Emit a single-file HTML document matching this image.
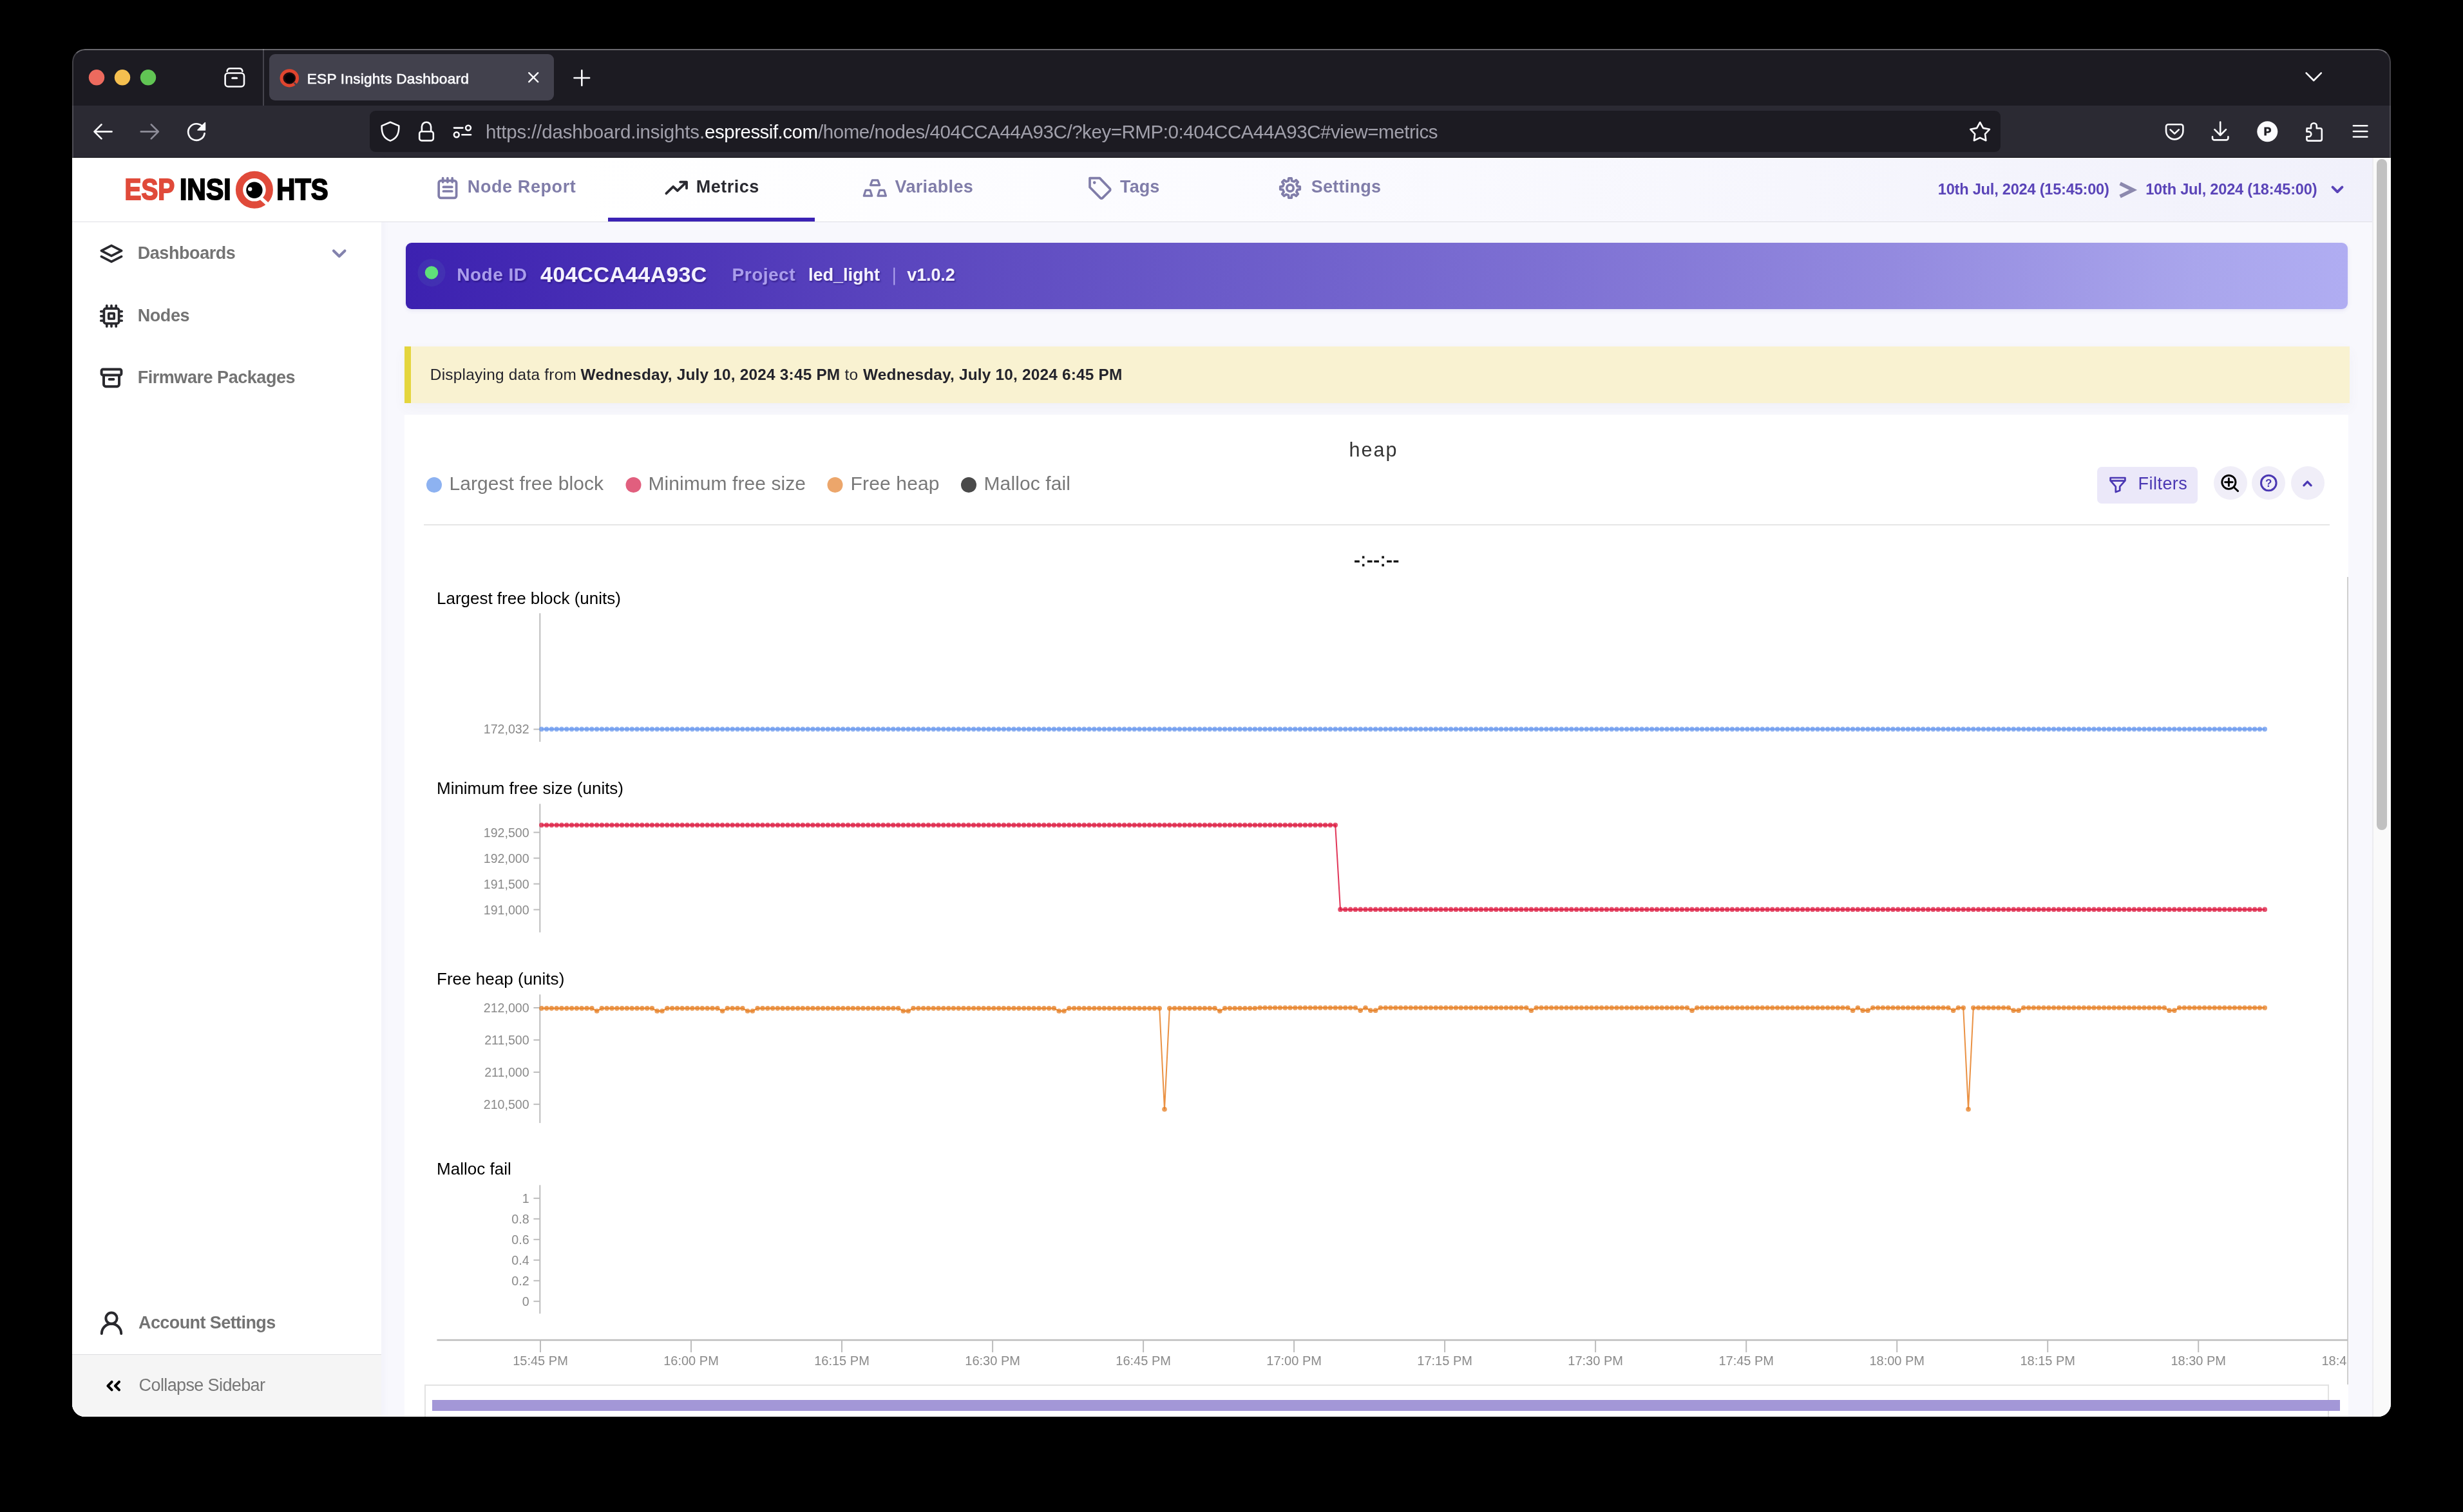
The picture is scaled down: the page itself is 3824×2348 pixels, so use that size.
<!DOCTYPE html>
<html lang="en"><head><meta charset="utf-8"><title>ESP Insights Dashboard</title>
<style>
html,body{margin:0;padding:0;background:#000;}
body{width:3824px;height:2348px;position:relative;overflow:hidden;font-family:"Liberation Sans",sans-serif;}
#win{position:absolute;left:0;top:0;width:3824px;height:2348px;clip-path:inset(76px 112px 148px 112px round 20px);}
#win>div{position:absolute;box-sizing:border-box;}
#ov{will-change:transform;position:absolute;left:0;top:0;width:3824px;height:2348px;font-family:"Liberation Sans",sans-serif;}
#ov text{white-space:pre;}
#edge{position:absolute;left:112px;top:76px;width:3600px;height:2124px;box-sizing:border-box;border-radius:20px;
 border-top:2px solid rgba(255,255,255,.34);border-left:2px solid rgba(255,255,255,.17);border-right:2px solid rgba(255,255,255,.17);pointer-events:none;
 -webkit-mask-image:linear-gradient(#000 0,#000 170px,transparent 171px);mask-image:linear-gradient(#000 0,#000 170px,transparent 171px);}
</style></head><body>
<div id="win">
<div style="left:112px;top:76px;width:3600px;height:88px;background:#1c1b22"></div>
<div style="left:112px;top:164px;width:3600px;height:81px;background:#2b2a33;border-bottom:1px solid #09090b"></div>
<div style="left:408px;top:76px;width:2px;height:88px;background:#45444d"></div>
<div style="left:418px;top:84px;width:442px;height:72px;background:#42414d;border-radius:9px"></div>
<div style="left:574px;top:172px;width:2532px;height:64px;background:#1c1b22;border-radius:9px"></div>
<div style="left:112px;top:245px;width:3600px;height:1955px;background:#f8f8fd"></div>
<div style="left:3683px;top:245px;width:29px;height:1955px;background:#fafafa;border-left:2px solid #ececf0"></div>
<div style="left:3690px;top:247px;width:16px;height:1042px;background:#c1c1c1;border-radius:8px"></div>
<div style="left:112px;top:245px;width:480px;height:1955px;background:#fff;box-shadow:3px 0 10px rgba(120,120,180,.05)"></div>
<div style="left:112px;top:2103px;width:480px;height:97px;background:#f5f5f5;border-top:1.4px solid #dcdce0"></div>
<div style="left:112px;top:245px;width:3571px;height:100px;background:linear-gradient(90deg,#fff 0%,#fff 22%,#fbfbff 50%,#f1f1fb 100%);border-bottom:1.4px solid #dfdfe5"></div>
<div style="left:944px;top:338px;width:321px;height:6px;background:#3b22b4"></div>
<div style="left:630px;top:377px;width:3015px;height:103px;border-radius:9px;background:linear-gradient(90deg,#3c21b0 0%,#4a31b6 12%,#5a45be 25%,#6b5bc9 42%,#7f72d4 60%,#958ce0 78%,#a9a5ec 92%,#b0adf2 100%);box-shadow:0 2px 6px rgba(80,70,180,.12)"></div>
<div style="left:628px;top:538px;width:3020px;height:88px;background:#f9f2d1;border-left:10px solid #e4d53d;box-shadow:0 8px 18px rgba(90,90,120,.05)"></div>
<div style="left:628px;top:644px;width:3018px;height:1560px;background:#fff"></div>
<div style="left:658px;top:814px;width:2959px;height:2px;background:#e6e6e6"></div>
<div style="left:3644px;top:896px;width:2px;height:1254px;background:#cfcfcf"></div>
<div style="left:3256px;top:725px;width:156px;height:57px;background:#ebe8f9;border-radius:7px"></div>
<div style="left:3436.5px;top:724px;width:52px;height:52px;background:#f0eef8;border-radius:26px"></div>
<div style="left:3496.3px;top:724px;width:52px;height:52px;background:#f0eef8;border-radius:26px"></div>
<div style="left:3556.5px;top:724px;width:52px;height:52px;background:#f0eef8;border-radius:26px"></div>
<div style="left:659px;top:2150px;width:2957px;height:60px;border:2px solid #e2e2e2;background:#fff"></div>
<div style="left:671px;top:2173.5px;width:2962px;height:17.5px;background:#a397d7"></div>
<svg id="ov" viewBox="0 0 3824 2348" width="3824" height="2348">
<defs><filter id="ts" x="-5%" y="-30%" width="110%" height="170%"><feDropShadow dx="1.5" dy="2" stdDeviation="1.2" flood-color="#1a0f5c" flood-opacity=".45"/></filter><marker id="mb" viewBox="0 0 10 10" refX="5" refY="5" markerWidth="8" markerHeight="8" markerUnits="userSpaceOnUse"><circle cx="5" cy="5" r="4.8" fill="#6495ed" fill-opacity=".74"/></marker><marker id="mr" viewBox="0 0 10 10" refX="5" refY="5" markerWidth="8" markerHeight="8" markerUnits="userSpaceOnUse"><circle cx="5" cy="5" r="4.8" fill="#dc143c" fill-opacity=".74"/></marker><marker id="mo" viewBox="0 0 10 10" refX="5" refY="5" markerWidth="8" markerHeight="8" markerUnits="userSpaceOnUse"><circle cx="5" cy="5" r="4.8" fill="#e67e22" fill-opacity=".74"/></marker><clipPath id="cx"><rect x="660" y="2070" width="2983.4" height="70"/></clipPath></defs>
<circle cx="150" cy="120.3" r="12.2" fill="#ed6a5e"/>
<circle cx="190" cy="120.3" r="12.2" fill="#f5bf4f"/>
<circle cx="230" cy="120.3" r="12.2" fill="#61c554"/>
<g fill="none" stroke="#fbfbfe" stroke-width="2.6" stroke-linecap="round" stroke-linejoin="round"><rect x="349.6" y="113.5" width="29.4" height="21" rx="4.5"/><path d="M352.6 110.6 Q353 106.2 357.6 106.2 H371.4 Q376 106.2 376.4 110.6"/><path d="M360.8 121.3 h6.8" stroke-width="3"/></g>
<ellipse cx="449.3" cy="121.3" rx="12.3" ry="11.6" fill="#1d0c0e" stroke="#e0452f" stroke-width="5"/><ellipse cx="449.8" cy="121.8" rx="7.2" ry="6.8" fill="#050307"/><path d="M456.6 128.4 l4.6 4.4" stroke="#42414d" stroke-width="2.6"/>
<text x="476.8" y="129.9" font-size="22.6" fill="#fbfbfe" textLength="251" stroke="#fbfbfe" stroke-width="0.6">ESP Insights Dashboard</text>
<path d="M821.2 113.2 l14 14 M835.2 113.2 l-14 14" stroke="#fbfbfe" stroke-width="2.4" stroke-linecap="round"/>
<path d="M891.5 121 h23.6 M903.3 109.2 v23.6" stroke="#fbfbfe" stroke-width="2.6" stroke-linecap="round"/>
<path d="M3580.6 113.4 l11.6 11.6 l11.6 -11.6" fill="none" stroke="#fbfbfe" stroke-width="2.6" stroke-linecap="round" stroke-linejoin="round"/>
<path d="M173.5 204.4 h-26 M157.5 193.4 l-11 11 l11 11" fill="none" stroke="#fbfbfe" stroke-width="2.7" stroke-linecap="round" stroke-linejoin="round"/>
<g transform="translate(464.6 0) scale(-1 1)"><path d="M245.8 204.4 h-26 M229.8 193.4 l-11 11 l11 11" fill="none" stroke="#8d8c98" stroke-width="2.7" stroke-linecap="round" stroke-linejoin="round"/></g>
<g fill="none" stroke="#fbfbfe" stroke-width="2.7" stroke-linecap="round" stroke-linejoin="round"><path d="M316.5 199.5 A12.8 12.8 0 1 0 317.6 207.2"/></g><path d="M318.4 190.6 v11.4 h-11.4 z" fill="#fbfbfe" stroke="#fbfbfe" stroke-width="1.6" stroke-linejoin="round"/>
<path d="M606 189.8 L619.3 195.4 C619.6 207.6 616.4 214.6 606 218.6 C595.6 214.6 592.4 207.6 592.7 195.4 Z" fill="none" stroke="#fbfbfe" stroke-width="2.6" stroke-linejoin="round"/>
<g fill="none" stroke="#fbfbfe" stroke-width="2.6" stroke-linejoin="round"><rect x="651.2" y="204.2" width="21.6" height="14.2" rx="3.4"/><path d="M654.9 204.2 v-7.4 a7.1 7.1 0 0 1 14.2 0 v7.4"/></g>
<g fill="none" stroke="#fbfbfe" stroke-width="2.6" stroke-linecap="round"><path d="M705 198.6 h13.4"/><circle cx="727" cy="198.6" r="3.9"/><circle cx="708.8" cy="209.2" r="3.9"/><path d="M717.4 209.2 h13.6"/></g>
<text x="753.9" y="214.8" font-size="29.5" fill="#a1a0ab" textLength="340.2">https://dashboard.insights.</text>
<text x="1094.1" y="214.8" font-size="29.5" fill="#fbfbfe" textLength="175.9">espressif.com</text>
<text x="1270" y="214.8" font-size="29.5" fill="#a1a0ab" textLength="962.5">/home/nodes/404CCA44A93C/?key=RMP:0:404CCA44A93C#view=metrics</text>
<polygon points="3074.1,190.0 3079.0,198.9 3088.9,200.8 3082.0,208.2 3083.3,218.2 3074.1,213.9 3064.9,218.2 3066.2,208.2 3059.3,200.8 3069.2,198.9" fill="none" stroke="#fbfbfe" stroke-width="2.6" stroke-linejoin="round"/>
<g fill="none" stroke="#fbfbfe" stroke-width="2.6" stroke-linecap="round" stroke-linejoin="round"><path d="M3366.6 193.2 h19.2 a3.6 3.6 0 0 1 3.6 3.6 v6.4 a13.2 13.2 0 0 1 -26.4 0 v-6.4 a3.6 3.6 0 0 1 3.6 -3.6z"/><path d="M3369.6 201.4 l6.6 6.2 l6.6 -6.2"/></g>
<g fill="none" stroke="#fbfbfe" stroke-width="2.6" stroke-linecap="round" stroke-linejoin="round"><path d="M3447.2 189.6 v19.6 M3438.4 201.2 l8.8 8.8 l8.8 -8.8"/><path d="M3435 212.2 v2.2 a3 3 0 0 0 3 3 h18.4 a3 3 0 0 0 3 -3 v-2.2"/></g>
<circle cx="3520.3" cy="204.2" r="16" fill="#fbfbfe"/>
<text x="3520.6" y="210.3" font-size="17.4" fill="#1c1b22" font-weight="700" text-anchor="middle" stroke="#1c1b22" stroke-width="0.8">P</text>
<path d="M3581.6 199.2 h6.4 v-3.6 a4.4 4.4 0 0 1 8.8 0 v3.6 h5.4 a2.6 2.6 0 0 1 2.6 2.6 v14.2 a2.6 2.6 0 0 1 -2.6 2.6 h-18.2 a2.6 2.6 0 0 1 -2.6 -2.6 v-3.8 h3 a3.9 3.9 0 0 0 0 -7.8 h-3 v-2.6 a2.6 2.6 0 0 1 2.6 -2.6z" fill="none" stroke="#fbfbfe" stroke-width="2.6" stroke-linejoin="round"/>
<path d="M3653.8 195.2 h21.6 M3653.8 204 h21.6 M3653.8 212.6 h21.6" stroke="#fbfbfe" stroke-width="2.5" stroke-linecap="round"/>
<text x="193.6" y="309.6" font-size="46.2" fill="#e04a3a" font-weight="700" textLength="77.6" lengthAdjust="spacingAndGlyphs" stroke-width="2" stroke-linejoin="miter" stroke="#e04a3a">ESP</text>
<text x="279" y="309.6" font-size="46.2" fill="#000" font-weight="700" textLength="79.5" lengthAdjust="spacingAndGlyphs" stroke-width="2" stroke-linejoin="miter" stroke="#000">INSI</text>
<text x="429.2" y="309.6" font-size="46.2" fill="#000" font-weight="700" textLength="80.4" lengthAdjust="spacingAndGlyphs" stroke-width="2" stroke-linejoin="miter" stroke="#000">HTS</text>
<circle cx="394.9" cy="294.8" r="23.4" fill="#fff" stroke="#e04a3a" stroke-width="11.2"/><circle cx="394.9" cy="295.2" r="12.7" fill="#000"/><circle cx="388.2" cy="293.6" r="3.2" fill="#fff"/><path d="M404.6 307.2 L418 319.5" stroke="#fff" stroke-width="5.4"/>
<g fill="none" stroke="#807da9" stroke-width="3.7" stroke-linecap="round" stroke-linejoin="round"><rect x="681.2" y="280.6" width="27.4" height="26.8" rx="3.4"/><path d="M687.6 276.6 v6.2 M694.9 276.6 v6.2 M702.2 276.6 v6.2"/><path d="M688.4 290.4 h13.4 M688.4 297 h13.4"/></g>
<text x="725.8" y="298.8" font-size="27" fill="#807da9" font-weight="700" textLength="168">Node Report</text>
<path d="M1034.4 300.4 L1045.2 289.8 L1051.8 296.2 L1065.6 282.8 M1056.2 282.6 H1066 V292.4" fill="none" stroke="#2a2a31" stroke-width="3.8" stroke-linecap="round" stroke-linejoin="round"/>
<text x="1080.8" y="298.8" font-size="27" fill="#2a2a31" font-weight="700" textLength="97.5">Metrics</text>
<path d="M1354.35 279.9 h8.5 l2.9000000000000004 7.7000000000000455 h-14.3 z M1344.1 295.3 h6.8 l2.85 8.899999999999977 h-12.5 z M1365.8 295.3 h6.8 l2.85 8.899999999999977 h-12.5 z" fill="none" stroke="#807da9" stroke-width="3.2" stroke-linejoin="round"/>
<text x="1389.6" y="298.8" font-size="27" fill="#807da9" font-weight="700" textLength="121.2">Variables</text>
<path d="M1692 276.6 h15.4 l15.6 16.2 a2.4 2.4 0 0 1 0 3.4 l-11.2 11.2 a2.4 2.4 0 0 1 -3.4 0 l-16.4 -16.6 z" fill="none" stroke="#807da9" stroke-width="3.7" stroke-linejoin="round"/><circle cx="1699.2" cy="283.6" r="2.3" fill="#807da9"/>
<text x="1739.1" y="298.8" font-size="27" fill="#807da9" font-weight="700" textLength="61.2">Tags</text>
<polygon points="2000.38,280.70 2000.83,276.75 2005.17,276.75 2005.62,280.70 2009.14,282.16 2012.25,279.68 2015.32,282.75 2012.84,285.86 2014.30,289.38 2018.25,289.83 2018.25,294.17 2014.30,294.62 2012.84,298.14 2015.32,301.25 2012.25,304.32 2009.14,301.84 2005.62,303.30 2005.17,307.25 2000.83,307.25 2000.38,303.30 1996.86,301.84 1993.75,304.32 1990.68,301.25 1993.16,298.14 1991.70,294.62 1987.75,294.17 1987.75,289.83 1991.70,289.38 1993.16,285.86 1990.68,282.75 1993.75,279.68 1996.86,282.16" fill="none" stroke="#807da9" stroke-width="3.7" stroke-linejoin="round"/><circle cx="2003" cy="292" r="5.2" fill="none" stroke="#807da9" stroke-width="3.7"/>
<text x="2035.7" y="298.8" font-size="27" fill="#807da9" font-weight="700" textLength="108.3">Settings</text>
<text x="3008.8" y="301.6" font-size="23.6" fill="#5a44b8" font-weight="700" textLength="266">10th Jul, 2024 (15:45:00)</text>
<path d="M3291.6 285 L3312 295 L3291.6 305" fill="none" stroke="#8c89ae" stroke-width="5.4" stroke-linejoin="miter"/>
<text x="3331.2" y="301.6" font-size="23.6" fill="#5a44b8" font-weight="700" textLength="266.3">10th Jul, 2024 (18:45:00)</text>
<path d="M3621.6 290.6 l7.4 7.4 l7.4 -7.4" fill="none" stroke="#5a44b8" stroke-width="4" stroke-linecap="round" stroke-linejoin="round"/>
<g fill="none" stroke="#29292e" stroke-width="3.7" stroke-linejoin="round" stroke-linecap="round"><path d="M173 381.4 l15.6 8 l-15.6 8 l-15.6 -8 z"/><path d="M157.4 398.4 l15.6 8 l15.6 -8"/></g>
<text x="213.7" y="401.8" font-size="27" fill="#737373" font-weight="700" textLength="152.2">Dashboards</text>
<path d="M518 389.4 l8.7 8.7 l8.7 -8.7" fill="none" stroke="#8382ad" stroke-width="4.2" stroke-linecap="round" stroke-linejoin="round"/>
<g fill="none" stroke="#29292e" stroke-width="3.7" stroke-linecap="round" stroke-linejoin="round"><rect x="161.4" y="479.2" width="23.2" height="23.2" rx="3"/><rect x="168.8" y="486.6" width="8.4" height="8.4" rx="0.8"/><path d="M165.8 474.6 v4.4 M165.8 502.6 v4.4 M156.8 483.6 h4.4 M184.8 483.6 h4.4"/><path d="M173 474.6 v4.4 M173 502.6 v4.4 M156.8 490.8 h4.4 M184.8 490.8 h4.4"/><path d="M180.2 474.6 v4.4 M180.2 502.6 v4.4 M156.8 498.0 h4.4 M184.8 498.0 h4.4"/></g>
<text x="213.7" y="499.2" font-size="27" fill="#737373" font-weight="700" textLength="80.8">Nodes</text>
<g fill="none" stroke="#29292e" stroke-width="4" stroke-linejoin="round" stroke-linecap="round"><rect x="157.6" y="573.4" width="30.8" height="9.2" rx="2.4"/><path d="M161 582.8 v14 a3.4 3.4 0 0 0 3.4 3.4 h17.2 a3.4 3.4 0 0 0 3.4 -3.4 v-14"/><path d="M169.6 589 h6.8"/></g>
<text x="213.7" y="595.2" font-size="27" fill="#737373" font-weight="700" textLength="244.8">Firmware Packages</text>
<g fill="none" stroke="#29292e" stroke-width="4" stroke-linecap="round"><circle cx="173" cy="2047.2" r="8.6"/><path d="M157.8 2071 a15.2 15.2 0 0 1 30.4 0"/></g>
<text x="215" y="2062.6" font-size="27" fill="#737373" font-weight="700" textLength="213.3">Account Settings</text>
<path d="M173.6 2145.9 l-6.2 6.2 l6.2 6.2 M185 2145.9 l-6.2 6.2 l6.2 6.2" fill="none" stroke="#000" stroke-width="4" stroke-linecap="round" stroke-linejoin="round"/>
<text x="215.6" y="2160.2" font-size="27" fill="#777" textLength="196.4">Collapse Sidebar</text>
<circle cx="670" cy="423.4" r="21.5" fill="#6fd0c0" opacity=".08"/><circle cx="670" cy="423.4" r="10.2" fill="#5fe07a"/>
<g filter="url(#ts)">
<text x="709.2" y="436" font-size="28" fill="#aa9dec" font-weight="700" textLength="108.8">Node ID</text>
<text x="839" y="438.4" font-size="34" fill="#f4f1ff" font-weight="700" textLength="258.3">404CCA44A93C</text>
<text x="1136.6" y="436" font-size="28" fill="#aa9dec" font-weight="700" textLength="97.9">Project</text>
<text x="1255" y="436" font-size="27" fill="#f4f1ff" font-weight="700" textLength="111">led_light</text>
<text x="1408.3" y="436" font-size="27" fill="#f4f1ff" font-weight="700" textLength="74.4">v1.0.2</text>
</g>
<path d="M1388.3 415.6 v27" stroke="#b3a8ef" stroke-width="2"/>
<text x="667.8" y="589.8" font-size="24.4" fill="#23232b" textLength="227">Displaying data from</text>
<text x="901.6" y="589.8" font-size="24.4" fill="#23232b" font-weight="700" textLength="402.6">Wednesday, July 10, 2024 3:45 PM</text>
<text x="1311.6" y="589.8" font-size="24.4" fill="#23232b" textLength="20.6">to</text>
<text x="1340" y="589.8" font-size="24.4" fill="#23232b" font-weight="700" textLength="402.4">Wednesday, July 10, 2024 6:45 PM</text>
<text x="2094.4" y="709" font-size="30.5" fill="#333" textLength="74">heap</text>
<circle cx="674" cy="753" r="12" fill="#8db2f1"/>
<text x="697.5" y="761.4" font-size="30" fill="#787878" textLength="239.5">Largest free block</text>
<circle cx="983.5" cy="753" r="12" fill="#e15f7e"/>
<text x="1006.5" y="761.4" font-size="30" fill="#787878" textLength="244.5">Minimum free size</text>
<circle cx="1296.5" cy="753" r="12" fill="#eca66b"/>
<text x="1320.5" y="761.4" font-size="30" fill="#787878" textLength="138">Free heap</text>
<circle cx="1504" cy="753" r="12" fill="#4a4a4a"/>
<text x="1527.5" y="761.4" font-size="30" fill="#787878" textLength="134.5">Malloc fail</text>
<path d="M3276.6 742 h22.8 v4.4 l-8.2 9.2 v6.2 l-6.4 2.2 v-8.4 l-8.2 -9.2 z M3276.6 746.6 h22.8" fill="none" stroke="#4b38b3" stroke-width="2.7" stroke-linejoin="round"/>
<text x="3319.6" y="760.4" font-size="27" fill="#4b38b3" textLength="76.2">Filters</text>
<g fill="none" stroke="#000" stroke-width="2.9" stroke-linecap="round"><circle cx="3460.4" cy="748.8" r="10.6"/><path d="M3468.4 756.8 l6.2 5.8 M3454.6 748.8 h11.6 M3460.4 743 v11.6"/></g>
<circle cx="3522.3" cy="750" r="11.8" fill="none" stroke="#4b38b3" stroke-width="3"/>
<text x="3522.3" y="756.2" font-size="17" fill="#4b38b3" font-weight="700" text-anchor="middle">?</text>
<path d="M3576.9 753.8 l5.6 -5.7 l5.6 5.7" fill="none" stroke="#4b38b3" stroke-width="3.3" stroke-linecap="round" stroke-linejoin="round"/>
<text x="2102.2" y="879.2" font-size="28" fill="#111" textLength="70" stroke="#111" stroke-width="0.9">-:--:--</text>
<text x="678" y="937.6" font-size="26" fill="#000" textLength="285.90000000000003">Largest free block (units)</text>
<path d="M838.3 952.3 v199.6" stroke="#bdbdbd" stroke-width="2"/>
<path d="M828.4 1132.5 h10" stroke="#bdbdbd" stroke-width="2"/>
<text x="821.6" y="1139.4" font-size="19.6" fill="#8a8a8a" text-anchor="end">172,032</text>
<text x="678" y="1233.2" font-size="26" fill="#000" textLength="290.0">Minimum free size (units)</text>
<path d="M838.3 1248.3 v199.6" stroke="#bdbdbd" stroke-width="2"/>
<path d="M828.4 1292.6 h10" stroke="#bdbdbd" stroke-width="2"/>
<text x="821.6" y="1299.5" font-size="19.6" fill="#8a8a8a" text-anchor="end">192,500</text>
<path d="M828.4 1332.6 h10" stroke="#bdbdbd" stroke-width="2"/>
<text x="821.6" y="1339.5" font-size="19.6" fill="#8a8a8a" text-anchor="end">192,000</text>
<path d="M828.4 1372.6 h10" stroke="#bdbdbd" stroke-width="2"/>
<text x="821.6" y="1379.5" font-size="19.6" fill="#8a8a8a" text-anchor="end">191,500</text>
<path d="M828.4 1412.6 h10" stroke="#bdbdbd" stroke-width="2"/>
<text x="821.6" y="1419.5" font-size="19.6" fill="#8a8a8a" text-anchor="end">191,000</text>
<text x="678" y="1528.8000000000002" font-size="26" fill="#000" textLength="198.29999999999998">Free heap (units)</text>
<path d="M838.3 1544.3 v199.6" stroke="#bdbdbd" stroke-width="2"/>
<path d="M828.4 1565 h10" stroke="#bdbdbd" stroke-width="2"/>
<text x="821.6" y="1571.9" font-size="19.6" fill="#8a8a8a" text-anchor="end">212,000</text>
<path d="M828.4 1615 h10" stroke="#bdbdbd" stroke-width="2"/>
<text x="821.6" y="1621.9" font-size="19.6" fill="#8a8a8a" text-anchor="end">211,500</text>
<path d="M828.4 1665 h10" stroke="#bdbdbd" stroke-width="2"/>
<text x="821.6" y="1671.9" font-size="19.6" fill="#8a8a8a" text-anchor="end">211,000</text>
<path d="M828.4 1714.8 h10" stroke="#bdbdbd" stroke-width="2"/>
<text x="821.6" y="1721.7" font-size="19.6" fill="#8a8a8a" text-anchor="end">210,500</text>
<text x="678" y="1824.4" font-size="26" fill="#000" textLength="115.89999999999999">Malloc fail</text>
<path d="M838.3 1840.3 v199.6" stroke="#bdbdbd" stroke-width="2"/>
<path d="M828.4 1860.8 h10" stroke="#bdbdbd" stroke-width="2"/>
<text x="821.6" y="1867.7" font-size="19.6" fill="#8a8a8a" text-anchor="end">1</text>
<path d="M828.4 1892.8 h10" stroke="#bdbdbd" stroke-width="2"/>
<text x="821.6" y="1899.7" font-size="19.6" fill="#8a8a8a" text-anchor="end">0.8</text>
<path d="M828.4 1924.8 h10" stroke="#bdbdbd" stroke-width="2"/>
<text x="821.6" y="1931.7" font-size="19.6" fill="#8a8a8a" text-anchor="end">0.6</text>
<path d="M828.4 1956.8 h10" stroke="#bdbdbd" stroke-width="2"/>
<text x="821.6" y="1963.7" font-size="19.6" fill="#8a8a8a" text-anchor="end">0.4</text>
<path d="M828.4 1988.8 h10" stroke="#bdbdbd" stroke-width="2"/>
<text x="821.6" y="1995.7" font-size="19.6" fill="#8a8a8a" text-anchor="end">0.2</text>
<path d="M828.4 2020.8 h10" stroke="#bdbdbd" stroke-width="2"/>
<text x="821.6" y="2027.7" font-size="19.6" fill="#8a8a8a" text-anchor="end">0</text>
<polyline points="840.8,1132.3 848.6,1132.3 856.4,1132.3 864.2,1132.3 872.0,1132.3 879.8,1132.3 887.6,1132.3 895.4,1132.3 903.2,1132.3 911.0,1132.3 918.8,1132.3 926.6,1132.3 934.4,1132.3 942.2,1132.3 950.0,1132.3 957.8,1132.3 965.6,1132.3 973.4,1132.3 981.2,1132.3 989.0,1132.3 996.8,1132.3 1004.6,1132.3 1012.4,1132.3 1020.2,1132.3 1028.0,1132.3 1035.8,1132.3 1043.6,1132.3 1051.4,1132.3 1059.2,1132.3 1067.0,1132.3 1074.8,1132.3 1082.6,1132.3 1090.4,1132.3 1098.2,1132.3 1106.0,1132.3 1113.8,1132.3 1121.6,1132.3 1129.4,1132.3 1137.2,1132.3 1145.0,1132.3 1152.8,1132.3 1160.6,1132.3 1168.4,1132.3 1176.2,1132.3 1184.0,1132.3 1191.8,1132.3 1199.6,1132.3 1207.4,1132.3 1215.2,1132.3 1223.0,1132.3 1230.8,1132.3 1238.6,1132.3 1246.4,1132.3 1254.2,1132.3 1262.0,1132.3 1269.8,1132.3 1277.6,1132.3 1285.4,1132.3 1293.2,1132.3 1301.0,1132.3 1308.8,1132.3 1316.6,1132.3 1324.4,1132.3 1332.2,1132.3 1340.0,1132.3 1347.8,1132.3 1355.6,1132.3 1363.4,1132.3 1371.2,1132.3 1379.0,1132.3 1386.8,1132.3 1394.6,1132.3 1402.4,1132.3 1410.2,1132.3 1418.0,1132.3 1425.8,1132.3 1433.6,1132.3 1441.4,1132.3 1449.2,1132.3 1457.0,1132.3 1464.8,1132.3 1472.6,1132.3 1480.4,1132.3 1488.2,1132.3 1496.0,1132.3 1503.8,1132.3 1511.6,1132.3 1519.4,1132.3 1527.2,1132.3 1535.0,1132.3 1542.8,1132.3 1550.6,1132.3 1558.4,1132.3 1566.2,1132.3 1574.0,1132.3 1581.8,1132.3 1589.6,1132.3 1597.4,1132.3 1605.2,1132.3 1613.0,1132.3 1620.8,1132.3 1628.6,1132.3 1636.4,1132.3 1644.2,1132.3 1652.0,1132.3 1659.8,1132.3 1667.6,1132.3 1675.4,1132.3 1683.2,1132.3 1691.0,1132.3 1698.8,1132.3 1706.6,1132.3 1714.4,1132.3 1722.2,1132.3 1730.0,1132.3 1737.8,1132.3 1745.6,1132.3 1753.4,1132.3 1761.2,1132.3 1769.0,1132.3 1776.8,1132.3 1784.6,1132.3 1792.4,1132.3 1800.2,1132.3 1808.0,1132.3 1815.8,1132.3 1823.6,1132.3 1831.4,1132.3 1839.2,1132.3 1847.0,1132.3 1854.8,1132.3 1862.6,1132.3 1870.4,1132.3 1878.2,1132.3 1886.0,1132.3 1893.8,1132.3 1901.6,1132.3 1909.4,1132.3 1917.2,1132.3 1925.0,1132.3 1932.8,1132.3 1940.6,1132.3 1948.4,1132.3 1956.2,1132.3 1964.0,1132.3 1971.8,1132.3 1979.6,1132.3 1987.4,1132.3 1995.2,1132.3 2003.0,1132.3 2010.8,1132.3 2018.6,1132.3 2026.4,1132.3 2034.2,1132.3 2042.0,1132.3 2049.8,1132.3 2057.6,1132.3 2065.4,1132.3 2073.2,1132.3 2081.0,1132.3 2088.8,1132.3 2096.6,1132.3 2104.4,1132.3 2112.2,1132.3 2120.0,1132.3 2127.8,1132.3 2135.6,1132.3 2143.4,1132.3 2151.2,1132.3 2159.0,1132.3 2166.8,1132.3 2174.6,1132.3 2182.4,1132.3 2190.2,1132.3 2198.0,1132.3 2205.8,1132.3 2213.6,1132.3 2221.4,1132.3 2229.2,1132.3 2237.0,1132.3 2244.8,1132.3 2252.6,1132.3 2260.4,1132.3 2268.2,1132.3 2276.0,1132.3 2283.8,1132.3 2291.6,1132.3 2299.4,1132.3 2307.2,1132.3 2315.0,1132.3 2322.8,1132.3 2330.6,1132.3 2338.4,1132.3 2346.2,1132.3 2354.0,1132.3 2361.8,1132.3 2369.6,1132.3 2377.4,1132.3 2385.2,1132.3 2393.0,1132.3 2400.8,1132.3 2408.6,1132.3 2416.4,1132.3 2424.2,1132.3 2432.0,1132.3 2439.8,1132.3 2447.6,1132.3 2455.4,1132.3 2463.2,1132.3 2471.0,1132.3 2478.8,1132.3 2486.6,1132.3 2494.4,1132.3 2502.2,1132.3 2510.0,1132.3 2517.8,1132.3 2525.6,1132.3 2533.4,1132.3 2541.2,1132.3 2549.0,1132.3 2556.8,1132.3 2564.6,1132.3 2572.4,1132.3 2580.2,1132.3 2588.0,1132.3 2595.8,1132.3 2603.6,1132.3 2611.4,1132.3 2619.2,1132.3 2627.0,1132.3 2634.8,1132.3 2642.6,1132.3 2650.4,1132.3 2658.2,1132.3 2666.0,1132.3 2673.8,1132.3 2681.6,1132.3 2689.4,1132.3 2697.2,1132.3 2705.0,1132.3 2712.8,1132.3 2720.6,1132.3 2728.4,1132.3 2736.2,1132.3 2744.0,1132.3 2751.8,1132.3 2759.6,1132.3 2767.4,1132.3 2775.2,1132.3 2783.0,1132.3 2790.8,1132.3 2798.6,1132.3 2806.4,1132.3 2814.2,1132.3 2822.0,1132.3 2829.8,1132.3 2837.6,1132.3 2845.4,1132.3 2853.2,1132.3 2861.0,1132.3 2868.8,1132.3 2876.6,1132.3 2884.4,1132.3 2892.2,1132.3 2900.0,1132.3 2907.8,1132.3 2915.6,1132.3 2923.4,1132.3 2931.2,1132.3 2939.0,1132.3 2946.8,1132.3 2954.6,1132.3 2962.4,1132.3 2970.2,1132.3 2978.0,1132.3 2985.8,1132.3 2993.6,1132.3 3001.4,1132.3 3009.2,1132.3 3017.0,1132.3 3024.8,1132.3 3032.6,1132.3 3040.4,1132.3 3048.2,1132.3 3056.0,1132.3 3063.8,1132.3 3071.6,1132.3 3079.4,1132.3 3087.2,1132.3 3095.0,1132.3 3102.8,1132.3 3110.6,1132.3 3118.4,1132.3 3126.2,1132.3 3134.0,1132.3 3141.8,1132.3 3149.6,1132.3 3157.4,1132.3 3165.2,1132.3 3173.0,1132.3 3180.8,1132.3 3188.6,1132.3 3196.4,1132.3 3204.2,1132.3 3212.0,1132.3 3219.8,1132.3 3227.6,1132.3 3235.4,1132.3 3243.2,1132.3 3251.0,1132.3 3258.8,1132.3 3266.6,1132.3 3274.4,1132.3 3282.2,1132.3 3290.0,1132.3 3297.8,1132.3 3305.6,1132.3 3313.4,1132.3 3321.2,1132.3 3329.0,1132.3 3336.8,1132.3 3344.6,1132.3 3352.4,1132.3 3360.2,1132.3 3368.0,1132.3 3375.8,1132.3 3383.6,1132.3 3391.4,1132.3 3399.2,1132.3 3407.0,1132.3 3414.8,1132.3 3422.6,1132.3 3430.4,1132.3 3438.2,1132.3 3446.0,1132.3 3453.8,1132.3 3461.6,1132.3 3469.4,1132.3 3477.2,1132.3 3485.0,1132.3 3492.8,1132.3 3500.6,1132.3 3508.4,1132.3 3516.2,1132.3" fill="none" stroke="#6495ed" stroke-opacity=".85" stroke-width="2" marker-start="url(#mb)" marker-mid="url(#mb)" marker-end="url(#mb)"/>
<polyline points="840.8,1281.3 848.6,1281.3 856.4,1281.3 864.2,1281.3 872.0,1281.3 879.8,1281.3 887.6,1281.3 895.4,1281.3 903.2,1281.3 911.0,1281.3 918.8,1281.3 926.6,1281.3 934.4,1281.3 942.2,1281.3 950.0,1281.3 957.8,1281.3 965.6,1281.3 973.4,1281.3 981.2,1281.3 989.0,1281.3 996.8,1281.3 1004.6,1281.3 1012.4,1281.3 1020.2,1281.3 1028.0,1281.3 1035.8,1281.3 1043.6,1281.3 1051.4,1281.3 1059.2,1281.3 1067.0,1281.3 1074.8,1281.3 1082.6,1281.3 1090.4,1281.3 1098.2,1281.3 1106.0,1281.3 1113.8,1281.3 1121.6,1281.3 1129.4,1281.3 1137.2,1281.3 1145.0,1281.3 1152.8,1281.3 1160.6,1281.3 1168.4,1281.3 1176.2,1281.3 1184.0,1281.3 1191.8,1281.3 1199.6,1281.3 1207.4,1281.3 1215.2,1281.3 1223.0,1281.3 1230.8,1281.3 1238.6,1281.3 1246.4,1281.3 1254.2,1281.3 1262.0,1281.3 1269.8,1281.3 1277.6,1281.3 1285.4,1281.3 1293.2,1281.3 1301.0,1281.3 1308.8,1281.3 1316.6,1281.3 1324.4,1281.3 1332.2,1281.3 1340.0,1281.3 1347.8,1281.3 1355.6,1281.3 1363.4,1281.3 1371.2,1281.3 1379.0,1281.3 1386.8,1281.3 1394.6,1281.3 1402.4,1281.3 1410.2,1281.3 1418.0,1281.3 1425.8,1281.3 1433.6,1281.3 1441.4,1281.3 1449.2,1281.3 1457.0,1281.3 1464.8,1281.3 1472.6,1281.3 1480.4,1281.3 1488.2,1281.3 1496.0,1281.3 1503.8,1281.3 1511.6,1281.3 1519.4,1281.3 1527.2,1281.3 1535.0,1281.3 1542.8,1281.3 1550.6,1281.3 1558.4,1281.3 1566.2,1281.3 1574.0,1281.3 1581.8,1281.3 1589.6,1281.3 1597.4,1281.3 1605.2,1281.3 1613.0,1281.3 1620.8,1281.3 1628.6,1281.3 1636.4,1281.3 1644.2,1281.3 1652.0,1281.3 1659.8,1281.3 1667.6,1281.3 1675.4,1281.3 1683.2,1281.3 1691.0,1281.3 1698.8,1281.3 1706.6,1281.3 1714.4,1281.3 1722.2,1281.3 1730.0,1281.3 1737.8,1281.3 1745.6,1281.3 1753.4,1281.3 1761.2,1281.3 1769.0,1281.3 1776.8,1281.3 1784.6,1281.3 1792.4,1281.3 1800.2,1281.3 1808.0,1281.3 1815.8,1281.3 1823.6,1281.3 1831.4,1281.3 1839.2,1281.3 1847.0,1281.3 1854.8,1281.3 1862.6,1281.3 1870.4,1281.3 1878.2,1281.3 1886.0,1281.3 1893.8,1281.3 1901.6,1281.3 1909.4,1281.3 1917.2,1281.3 1925.0,1281.3 1932.8,1281.3 1940.6,1281.3 1948.4,1281.3 1956.2,1281.3 1964.0,1281.3 1971.8,1281.3 1979.6,1281.3 1987.4,1281.3 1995.2,1281.3 2003.0,1281.3 2010.8,1281.3 2018.6,1281.3 2026.4,1281.3 2034.2,1281.3 2042.0,1281.3 2049.8,1281.3 2057.6,1281.3 2065.4,1281.3 2073.2,1281.3 2081.0,1412.4 2088.8,1412.4 2096.6,1412.4 2104.4,1412.4 2112.2,1412.4 2120.0,1412.4 2127.8,1412.4 2135.6,1412.4 2143.4,1412.4 2151.2,1412.4 2159.0,1412.4 2166.8,1412.4 2174.6,1412.4 2182.4,1412.4 2190.2,1412.4 2198.0,1412.4 2205.8,1412.4 2213.6,1412.4 2221.4,1412.4 2229.2,1412.4 2237.0,1412.4 2244.8,1412.4 2252.6,1412.4 2260.4,1412.4 2268.2,1412.4 2276.0,1412.4 2283.8,1412.4 2291.6,1412.4 2299.4,1412.4 2307.2,1412.4 2315.0,1412.4 2322.8,1412.4 2330.6,1412.4 2338.4,1412.4 2346.2,1412.4 2354.0,1412.4 2361.8,1412.4 2369.6,1412.4 2377.4,1412.4 2385.2,1412.4 2393.0,1412.4 2400.8,1412.4 2408.6,1412.4 2416.4,1412.4 2424.2,1412.4 2432.0,1412.4 2439.8,1412.4 2447.6,1412.4 2455.4,1412.4 2463.2,1412.4 2471.0,1412.4 2478.8,1412.4 2486.6,1412.4 2494.4,1412.4 2502.2,1412.4 2510.0,1412.4 2517.8,1412.4 2525.6,1412.4 2533.4,1412.4 2541.2,1412.4 2549.0,1412.4 2556.8,1412.4 2564.6,1412.4 2572.4,1412.4 2580.2,1412.4 2588.0,1412.4 2595.8,1412.4 2603.6,1412.4 2611.4,1412.4 2619.2,1412.4 2627.0,1412.4 2634.8,1412.4 2642.6,1412.4 2650.4,1412.4 2658.2,1412.4 2666.0,1412.4 2673.8,1412.4 2681.6,1412.4 2689.4,1412.4 2697.2,1412.4 2705.0,1412.4 2712.8,1412.4 2720.6,1412.4 2728.4,1412.4 2736.2,1412.4 2744.0,1412.4 2751.8,1412.4 2759.6,1412.4 2767.4,1412.4 2775.2,1412.4 2783.0,1412.4 2790.8,1412.4 2798.6,1412.4 2806.4,1412.4 2814.2,1412.4 2822.0,1412.4 2829.8,1412.4 2837.6,1412.4 2845.4,1412.4 2853.2,1412.4 2861.0,1412.4 2868.8,1412.4 2876.6,1412.4 2884.4,1412.4 2892.2,1412.4 2900.0,1412.4 2907.8,1412.4 2915.6,1412.4 2923.4,1412.4 2931.2,1412.4 2939.0,1412.4 2946.8,1412.4 2954.6,1412.4 2962.4,1412.4 2970.2,1412.4 2978.0,1412.4 2985.8,1412.4 2993.6,1412.4 3001.4,1412.4 3009.2,1412.4 3017.0,1412.4 3024.8,1412.4 3032.6,1412.4 3040.4,1412.4 3048.2,1412.4 3056.0,1412.4 3063.8,1412.4 3071.6,1412.4 3079.4,1412.4 3087.2,1412.4 3095.0,1412.4 3102.8,1412.4 3110.6,1412.4 3118.4,1412.4 3126.2,1412.4 3134.0,1412.4 3141.8,1412.4 3149.6,1412.4 3157.4,1412.4 3165.2,1412.4 3173.0,1412.4 3180.8,1412.4 3188.6,1412.4 3196.4,1412.4 3204.2,1412.4 3212.0,1412.4 3219.8,1412.4 3227.6,1412.4 3235.4,1412.4 3243.2,1412.4 3251.0,1412.4 3258.8,1412.4 3266.6,1412.4 3274.4,1412.4 3282.2,1412.4 3290.0,1412.4 3297.8,1412.4 3305.6,1412.4 3313.4,1412.4 3321.2,1412.4 3329.0,1412.4 3336.8,1412.4 3344.6,1412.4 3352.4,1412.4 3360.2,1412.4 3368.0,1412.4 3375.8,1412.4 3383.6,1412.4 3391.4,1412.4 3399.2,1412.4 3407.0,1412.4 3414.8,1412.4 3422.6,1412.4 3430.4,1412.4 3438.2,1412.4 3446.0,1412.4 3453.8,1412.4 3461.6,1412.4 3469.4,1412.4 3477.2,1412.4 3485.0,1412.4 3492.8,1412.4 3500.6,1412.4 3508.4,1412.4 3516.2,1412.4" fill="none" stroke="#dc143c" stroke-opacity=".85" stroke-width="2" marker-start="url(#mr)" marker-mid="url(#mr)" marker-end="url(#mr)"/>
<polyline points="840.8,1565.8 848.6,1565.8 856.4,1565.8 864.2,1565.8 872.0,1565.8 879.8,1565.8 887.6,1565.8 895.4,1565.8 903.2,1565.8 911.0,1565.8 918.8,1565.8 926.6,1570.0 934.4,1565.8 942.2,1565.8 950.0,1565.8 957.8,1565.8 965.6,1565.8 973.4,1565.8 981.2,1565.8 989.0,1565.8 996.8,1565.8 1004.6,1565.8 1012.4,1565.8 1020.2,1570.0 1028.0,1570.0 1035.8,1565.8 1043.6,1565.8 1051.4,1565.8 1059.2,1565.8 1067.0,1565.8 1074.8,1565.8 1082.6,1565.8 1090.4,1565.8 1098.2,1565.8 1106.0,1565.8 1113.8,1565.8 1121.6,1570.0 1129.4,1565.8 1137.2,1565.8 1145.0,1565.8 1152.8,1565.8 1160.6,1570.0 1168.4,1570.0 1176.2,1565.8 1184.0,1565.8 1191.8,1565.8 1199.6,1565.8 1207.4,1565.8 1215.2,1565.8 1223.0,1565.8 1230.8,1565.8 1238.6,1565.8 1246.4,1565.8 1254.2,1565.8 1262.0,1565.8 1269.8,1565.8 1277.6,1565.8 1285.4,1565.8 1293.2,1565.8 1301.0,1565.8 1308.8,1565.8 1316.6,1565.8 1324.4,1565.8 1332.2,1565.8 1340.0,1565.8 1347.8,1565.8 1355.6,1565.8 1363.4,1565.8 1371.2,1565.8 1379.0,1565.8 1386.8,1565.8 1394.6,1565.8 1402.4,1570.0 1410.2,1570.0 1418.0,1565.8 1425.8,1565.8 1433.6,1565.8 1441.4,1565.8 1449.2,1565.8 1457.0,1565.8 1464.8,1565.8 1472.6,1565.8 1480.4,1565.8 1488.2,1565.8 1496.0,1565.8 1503.8,1565.8 1511.6,1565.8 1519.4,1565.8 1527.2,1565.8 1535.0,1565.8 1542.8,1565.8 1550.6,1565.8 1558.4,1565.8 1566.2,1565.8 1574.0,1565.8 1581.8,1565.8 1589.6,1565.8 1597.4,1565.8 1605.2,1565.8 1613.0,1565.8 1620.8,1565.8 1628.6,1565.8 1636.4,1565.8 1644.2,1570.0 1652.0,1570.0 1659.8,1565.8 1667.6,1565.8 1675.4,1565.8 1683.2,1565.8 1691.0,1565.8 1698.8,1565.8 1706.6,1565.8 1714.4,1565.8 1722.2,1565.8 1730.0,1565.8 1737.8,1565.8 1745.6,1565.8 1753.4,1565.8 1761.2,1565.8 1769.0,1565.8 1776.8,1565.8 1784.6,1565.8 1792.4,1565.8 1800.2,1565.8 1808.0,1722.6 1815.8,1565.8 1823.6,1565.8 1831.4,1565.8 1839.2,1565.8 1847.0,1565.8 1854.8,1565.8 1862.6,1565.8 1870.4,1565.8 1878.2,1565.8 1886.0,1565.8 1893.8,1570.0 1901.6,1565.8 1909.4,1565.8 1917.2,1565.8 1925.0,1565.8 1932.8,1565.8 1940.6,1565.8 1948.4,1565.8 1956.2,1565.0 1964.0,1565.0 1971.8,1565.0 1979.6,1565.0 1987.4,1565.0 1995.2,1565.0 2003.0,1565.0 2010.8,1565.0 2018.6,1565.0 2026.4,1565.0 2034.2,1565.0 2042.0,1565.0 2049.8,1565.0 2057.6,1565.0 2065.4,1565.0 2073.2,1565.0 2081.0,1565.0 2088.8,1565.0 2096.6,1565.0 2104.4,1565.0 2112.2,1569.2 2120.0,1565.0 2127.8,1569.2 2135.6,1569.2 2143.4,1565.0 2151.2,1565.0 2159.0,1565.0 2166.8,1565.0 2174.6,1565.0 2182.4,1565.0 2190.2,1565.0 2198.0,1565.0 2205.8,1565.0 2213.6,1565.0 2221.4,1565.0 2229.2,1565.0 2237.0,1565.0 2244.8,1565.0 2252.6,1565.0 2260.4,1565.0 2268.2,1565.0 2276.0,1565.0 2283.8,1565.0 2291.6,1565.0 2299.4,1565.0 2307.2,1565.0 2315.0,1565.0 2322.8,1565.0 2330.6,1565.0 2338.4,1565.0 2346.2,1565.0 2354.0,1565.0 2361.8,1565.0 2369.6,1565.0 2377.4,1569.2 2385.2,1565.0 2393.0,1565.0 2400.8,1565.0 2408.6,1565.0 2416.4,1565.0 2424.2,1565.0 2432.0,1565.0 2439.8,1565.0 2447.6,1565.0 2455.4,1565.0 2463.2,1565.0 2471.0,1565.0 2478.8,1565.0 2486.6,1565.0 2494.4,1565.0 2502.2,1565.0 2510.0,1565.0 2517.8,1565.0 2525.6,1565.0 2533.4,1565.0 2541.2,1565.0 2549.0,1565.0 2556.8,1565.0 2564.6,1565.0 2572.4,1565.0 2580.2,1565.0 2588.0,1565.0 2595.8,1565.0 2603.6,1565.0 2611.4,1565.0 2619.2,1565.0 2627.0,1569.2 2634.8,1565.0 2642.6,1565.0 2650.4,1565.0 2658.2,1565.0 2666.0,1565.0 2673.8,1565.0 2681.6,1565.0 2689.4,1565.0 2697.2,1565.0 2705.0,1565.0 2712.8,1565.0 2720.6,1565.0 2728.4,1565.0 2736.2,1565.0 2744.0,1565.0 2751.8,1565.0 2759.6,1565.0 2767.4,1565.0 2775.2,1565.0 2783.0,1565.0 2790.8,1565.0 2798.6,1565.0 2806.4,1565.0 2814.2,1565.0 2822.0,1565.0 2829.8,1565.0 2837.6,1565.0 2845.4,1565.0 2853.2,1565.0 2861.0,1565.0 2868.8,1565.0 2876.6,1569.2 2884.4,1565.0 2892.2,1569.2 2900.0,1569.2 2907.8,1565.0 2915.6,1565.0 2923.4,1565.0 2931.2,1565.0 2939.0,1565.0 2946.8,1565.0 2954.6,1565.0 2962.4,1565.0 2970.2,1565.0 2978.0,1565.0 2985.8,1565.0 2993.6,1565.0 3001.4,1565.0 3009.2,1565.0 3017.0,1565.0 3024.8,1565.0 3032.6,1569.2 3040.4,1565.0 3048.2,1565.0 3056.0,1722.6 3063.8,1565.0 3071.6,1565.0 3079.4,1565.0 3087.2,1565.0 3095.0,1565.0 3102.8,1565.0 3110.6,1565.0 3118.4,1565.0 3126.2,1569.2 3134.0,1569.2 3141.8,1565.0 3149.6,1565.0 3157.4,1565.0 3165.2,1565.0 3173.0,1565.0 3180.8,1565.0 3188.6,1565.0 3196.4,1565.0 3204.2,1565.0 3212.0,1565.0 3219.8,1565.0 3227.6,1565.0 3235.4,1565.0 3243.2,1565.0 3251.0,1565.0 3258.8,1565.0 3266.6,1565.0 3274.4,1565.0 3282.2,1565.0 3290.0,1565.0 3297.8,1565.0 3305.6,1565.0 3313.4,1565.0 3321.2,1565.0 3329.0,1565.0 3336.8,1565.0 3344.6,1565.0 3352.4,1565.0 3360.2,1565.0 3368.0,1569.2 3375.8,1569.2 3383.6,1565.0 3391.4,1565.0 3399.2,1565.0 3407.0,1565.0 3414.8,1565.0 3422.6,1565.0 3430.4,1565.0 3438.2,1565.0 3446.0,1565.0 3453.8,1565.0 3461.6,1565.0 3469.4,1565.0 3477.2,1565.0 3485.0,1565.0 3492.8,1565.0 3500.6,1565.0 3508.4,1565.0 3516.2,1565.0" fill="none" stroke="#e67e22" stroke-opacity=".85" stroke-width="2" marker-start="url(#mo)" marker-mid="url(#mo)" marker-end="url(#mo)"/>
<path d="M678.4 2081 H3645" stroke="#bdbdbd" stroke-width="2.6"/>
<g clip-path="url(#cx)">
<path d="M839.0 2081 v19" stroke="#bdbdbd" stroke-width="2"/>
<text x="839.0" y="2120.2" font-size="20" fill="#8a8a8a" text-anchor="middle">15:45 PM</text>
<path d="M1073.0 2081 v19" stroke="#bdbdbd" stroke-width="2"/>
<text x="1073.0" y="2120.2" font-size="20" fill="#8a8a8a" text-anchor="middle">16:00 PM</text>
<path d="M1307.0 2081 v19" stroke="#bdbdbd" stroke-width="2"/>
<text x="1307.0" y="2120.2" font-size="20" fill="#8a8a8a" text-anchor="middle">16:15 PM</text>
<path d="M1541.1 2081 v19" stroke="#bdbdbd" stroke-width="2"/>
<text x="1541.1" y="2120.2" font-size="20" fill="#8a8a8a" text-anchor="middle">16:30 PM</text>
<path d="M1775.1 2081 v19" stroke="#bdbdbd" stroke-width="2"/>
<text x="1775.1" y="2120.2" font-size="20" fill="#8a8a8a" text-anchor="middle">16:45 PM</text>
<path d="M2009.1 2081 v19" stroke="#bdbdbd" stroke-width="2"/>
<text x="2009.1" y="2120.2" font-size="20" fill="#8a8a8a" text-anchor="middle">17:00 PM</text>
<path d="M2243.1 2081 v19" stroke="#bdbdbd" stroke-width="2"/>
<text x="2243.1" y="2120.2" font-size="20" fill="#8a8a8a" text-anchor="middle">17:15 PM</text>
<path d="M2477.1 2081 v19" stroke="#bdbdbd" stroke-width="2"/>
<text x="2477.1" y="2120.2" font-size="20" fill="#8a8a8a" text-anchor="middle">17:30 PM</text>
<path d="M2711.2 2081 v19" stroke="#bdbdbd" stroke-width="2"/>
<text x="2711.2" y="2120.2" font-size="20" fill="#8a8a8a" text-anchor="middle">17:45 PM</text>
<path d="M2945.2 2081 v19" stroke="#bdbdbd" stroke-width="2"/>
<text x="2945.2" y="2120.2" font-size="20" fill="#8a8a8a" text-anchor="middle">18:00 PM</text>
<path d="M3179.2 2081 v19" stroke="#bdbdbd" stroke-width="2"/>
<text x="3179.2" y="2120.2" font-size="20" fill="#8a8a8a" text-anchor="middle">18:15 PM</text>
<path d="M3413.2 2081 v19" stroke="#bdbdbd" stroke-width="2"/>
<text x="3413.2" y="2120.2" font-size="20" fill="#8a8a8a" text-anchor="middle">18:30 PM</text>
<path d="M3647.2 2081 v19" stroke="#bdbdbd" stroke-width="2"/>
<text x="3647.2" y="2120.2" font-size="20" fill="#8a8a8a" text-anchor="middle">18:45 PM</text>
</g>
</svg>
</div>
<div id="edge"></div>
</body></html>
